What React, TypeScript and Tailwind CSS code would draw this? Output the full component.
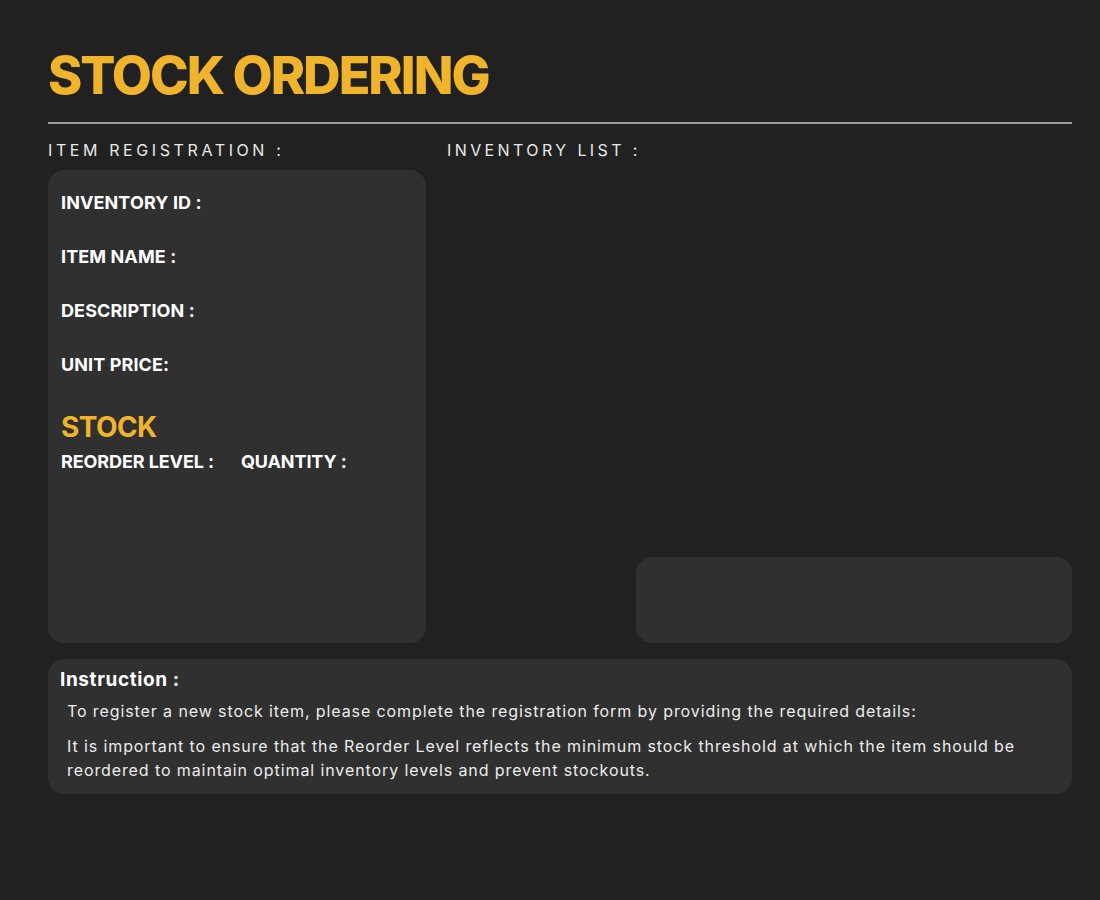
import React from 'react';

const fields = ['INVENTORY ID :', 'ITEM NAME :', 'DESCRIPTION :', 'UNIT PRICE:'];

const App: React.FC = () => {
  return (
    <div className="min-h-[900px] w-[1100px] bg-[#212121] font-['Inter','Open_Sans',sans-serif] text-white">
      <div className="ml-12 w-[1024px] pt-[44px]">
        {/* Title */}
        <h1 className="text-[52px] font-extrabold leading-[64px] tracking-[-2px] text-[#efb42b]">STOCK ORDERING</h1>
        <div className="mt-[14px] h-[2px] w-full bg-[#9d9d9d]" />

        {/* Main columns */}
        <div className="mt-[14px] flex gap-[21px]">
          {/* Item registration */}
          <div className="flex w-[378px] flex-col">
            <p className="text-[16px] font-normal leading-[24px] tracking-[3.6px] text-[#e8e8e8]">ITEM REGISTRATION :</p>
            <div className="mt-[8px] h-[473px] rounded-2xl bg-[#303030] px-[13px] pt-[21px]">
              <div className="flex flex-col gap-[30px]">
                {fields.map((f) => (
                  <p key={f} className="text-[18px] font-bold leading-[24px] tracking-[0.1px]">{f}</p>
                ))}
              </div>
              <p className="mt-[34px] text-[28px] font-bold leading-[32px] tracking-[-0.6px] text-[#efb42b]">STOCK</p>
              <div className="mt-[7px] flex gap-[27px] text-[18px] font-bold leading-[24px] tracking-[-0.1px]">
                <span>REORDER LEVEL :</span>
                <span>QUANTITY :</span>
              </div>
            </div>
          </div>

          {/* Inventory list */}
          <div className="flex flex-1 flex-col">
            <p className="text-[16px] font-normal leading-[24px] tracking-[3.4px] text-[#e8e8e8]">INVENTORY LIST :</p>
            <div className="flex-1" />
            <div className="ml-auto h-[86px] w-[436px] rounded-2xl bg-[#303030]" />
          </div>
        </div>

        {/* Instruction */}
        <div className="mt-[16px] rounded-2xl bg-[#303030] px-3 pb-[12px] pt-[8px]">
          <p className="text-[19px] font-bold leading-[26px] tracking-[0.6px]">Instruction :</p>
          <div className="ml-[7px] mt-[6px] w-[980px] text-[16px] leading-[24px] tracking-[0.9px] text-[#ececec]">
            <p>To register a new stock item, please complete the registration form by providing the required details:</p>
            <p className="mt-[11px]">
              It is important to ensure that the Reorder Level reflects the minimum stock threshold at which the item should be reordered to maintain optimal inventory levels and prevent stockouts.
            </p>
          </div>
        </div>
      </div>
    </div>
  );
};

export default App;
